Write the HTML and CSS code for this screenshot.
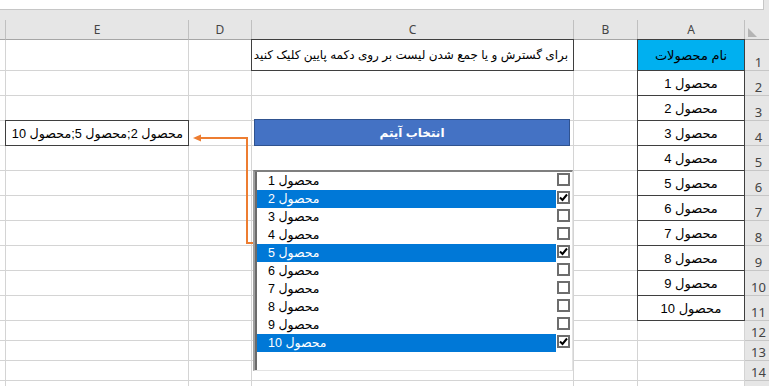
FILE: index.html
```html
<!DOCTYPE html>
<html lang="fa">
<head>
    <meta charset="UTF-8">
    <meta name="viewport" content="width=device-width, initial-scale=1.0">
    <title>لیست محصولات</title>
    <link rel="stylesheet" href="styles.css">
</head>
<body>

<div id="excel">
    <div class="formula-bar"><div class="formula-box"></div></div>
    <div class="outline-strip"></div>

    <div class="row col-head">
        <div></div><div>E</div><div>D</div><div>C</div><div>B</div><div>A</div>
        <div class="corner"><span class="tri"></span></div>
    </div>

    <div class="row tall">
        <div></div><div></div><div></div>
        <div class="boxed note" dir="rtl">برای گسترش و یا جمع شدن لیست بر روی دکمه پایین کلیک کنید</div>
        <div></div>
        <div class="boxed center title" dir="rtl">نام محصولات</div>
        <div class="num">1</div>
    </div>
    <div class="row">
        <div></div><div></div><div></div><div></div><div></div>
        <div class="boxed center" dir="rtl">محصول 1</div>
        <div class="num">2</div>
    </div>
    <div class="row">
        <div></div><div></div><div></div><div></div><div></div>
        <div class="boxed center" dir="rtl">محصول 2</div>
        <div class="num">3</div>
    </div>
    <div class="row">
        <div></div>
        <div class="boxed result" dir="rtl">محصول 2;محصول 5;محصول 10</div>
        <div></div><div></div><div></div>
        <div class="boxed center" dir="rtl">محصول 3</div>
        <div class="num">4</div>
    </div>
    <div class="row">
        <div></div><div></div><div></div><div></div><div></div>
        <div class="boxed center" dir="rtl">محصول 4</div>
        <div class="num">5</div>
    </div>
    <div class="row">
        <div></div><div></div><div></div><div></div><div></div>
        <div class="boxed center" dir="rtl">محصول 5</div>
        <div class="num">6</div>
    </div>
    <div class="row">
        <div></div><div></div><div></div><div></div><div></div>
        <div class="boxed center" dir="rtl">محصول 6</div>
        <div class="num">7</div>
    </div>
    <div class="row">
        <div></div><div></div><div></div><div></div><div></div>
        <div class="boxed center" dir="rtl">محصول 7</div>
        <div class="num">8</div>
    </div>
    <div class="row">
        <div></div><div></div><div></div><div></div><div></div>
        <div class="boxed center" dir="rtl">محصول 8</div>
        <div class="num">9</div>
    </div>
    <div class="row">
        <div></div><div></div><div></div><div></div><div></div>
        <div class="boxed center" dir="rtl">محصول 9</div>
        <div class="num">10</div>
    </div>
    <div class="row">
        <div></div><div></div><div></div><div></div><div></div>
        <div class="boxed center" dir="rtl">محصول 10</div>
        <div class="num">11</div>
    </div>
    <div class="row short">
        <div></div><div></div><div></div><div></div><div></div><div></div>
        <div class="num">12</div>
    </div>
    <div class="row short">
        <div></div><div></div><div></div><div></div><div></div><div></div>
        <div class="num">13</div>
    </div>
    <div class="row short">
        <div></div><div></div><div></div><div></div><div></div><div></div>
        <div class="num">14</div>
    </div>
    <div class="row short">
        <div></div><div></div><div></div><div></div><div></div><div></div>
        <div class="num"></div>
    </div>

    <!-- shapes lying over the sheet -->
    <div class="pick-btn" dir="rtl">انتخاب آیتم</div>

    <svg class="link" width="70" height="120" viewBox="0 0 70 120">
        <path d="M10 8 H57 V113 H66" fill="none" stroke="#ed7d31" stroke-width="2"/>
        <polygon points="3,8 11,4.5 11,11.5" fill="#ed7d31"/>
    </svg>

    <div class="listbox">
        <div class="item"><span class="label" dir="rtl">محصول 1</span><span class="cb"></span></div>
        <div class="item on"><span class="label" dir="rtl">محصول 2</span><span class="cb"><svg width="9" height="9" viewBox="0 0 9 9"><path d="M1 4.5 L3.5 7 L8 1.5" fill="none" stroke="#000" stroke-width="2"/></svg></span></div>
        <div class="item"><span class="label" dir="rtl">محصول 3</span><span class="cb"></span></div>
        <div class="item"><span class="label" dir="rtl">محصول 4</span><span class="cb"></span></div>
        <div class="item on"><span class="label" dir="rtl">محصول 5</span><span class="cb"><svg width="9" height="9" viewBox="0 0 9 9"><path d="M1 4.5 L3.5 7 L8 1.5" fill="none" stroke="#000" stroke-width="2"/></svg></span></div>
        <div class="item"><span class="label" dir="rtl">محصول 6</span><span class="cb"></span></div>
        <div class="item"><span class="label" dir="rtl">محصول 7</span><span class="cb"></span></div>
        <div class="item"><span class="label" dir="rtl">محصول 8</span><span class="cb"></span></div>
        <div class="item"><span class="label" dir="rtl">محصول 9</span><span class="cb"></span></div>
        <div class="item on"><span class="label" dir="rtl">محصول 10</span><span class="cb"><svg width="9" height="9" viewBox="0 0 9 9"><path d="M1 4.5 L3.5 7 L8 1.5" fill="none" stroke="#000" stroke-width="2"/></svg></span></div>
    </div>
</div>

</body>
</html>
```

FILE: styles.css
```css
body {
    margin: 0;
    padding: 0;
    background-color: #fff;
    font-family: "Liberation Sans", "DejaVu Sans", sans-serif;
    font-size: 12px;
    color: #000;
    overflow: hidden;
}

#excel {
    position: relative;
    width: 769px;
    height: 386px;
    overflow: hidden;
}

.formula-bar {
    height: 10px;
    background-color: #e6e6e6;
}

.formula-box {
    width: 764px;
    height: 10px;
    box-sizing: border-box;
    background-color: #fff;
    border-right: 1px solid #c6c6c6;
    border-bottom: 1px solid #c6c6c6;
}

.outline-strip {
    height: 10px;
    background-color: #e6e6e6;
}

.row {
    display: grid;
    grid-template-columns: 6px 183px 63px 322px 64px 107px 24px;
    height: 25px;
}

.row.tall {
    height: 31px;
}

.row.short,
.row.col-head {
    height: 20px;
}

.row > div {
    box-sizing: border-box;
    border-right: 1px solid #d4d4d4;
    border-bottom: 1px solid #d4d4d4;
    display: flex;
    align-items: center;
    min-width: 0;
    overflow: hidden;
    white-space: nowrap;
}

.col-head > div {
    background-color: #e6e6e6;
    border-right-color: #c0c0c0;
    border-bottom-color: #a6a6a6;
    justify-content: center;
    font-family: "Noto Sans", sans-serif;
    font-size: 12px;
    color: #444;
}

.row > .corner {
    border-right: none;
    justify-content: flex-start;
    align-items: flex-end;
    padding: 0 0 2px 3px;
}

.tri {
    width: 0;
    height: 0;
    border-left: 9px solid #b4b4b4;
    border-top: 9px solid transparent;
}

.row > .num {
    background-color: #e6e6e6;
    border-right: none;
    border-bottom-color: #c6c6c6;
    justify-content: center;
    align-items: flex-end;
    padding-left: 3px;
    font-family: "Noto Sans", sans-serif;
    font-size: 13px;
    line-height: 16px;
    color: #444;
}

.row > .boxed {
    margin: -1px 0 0 -1px;
    border: 1px solid #3f3f3f;
}

.center {
    justify-content: center;
    font-size: 13px;
}

.title {
    background-color: #00b0f0;
}

.note,
.result {
    padding: 0 5px;
}

.result {
    font-size: 12.7px;
}

.pick-btn {
    position: absolute;
    left: 254px;
    top: 119px;
    width: 316px;
    height: 27px;
    box-sizing: border-box;
    background-color: #4472c4;
    border: 1px solid #2f528f;
    color: #fff;
    font-weight: bold;
    display: flex;
    align-items: center;
    justify-content: center;
}

.link {
    position: absolute;
    left: 190px;
    top: 130px;
}

.listbox {
    position: absolute;
    left: 253px;
    top: 170px;
    width: 320px;
    height: 201px;
    box-sizing: border-box;
    background-color: #fff;
    border-top: 2px solid #7f7f7f;
    border-left: 2px solid #a0a0a0;
    border-right: 1px solid #e3e3e3;
    border-bottom: 1px solid #e3e3e3;
    box-shadow: inset 2px 0 0 #6b6b6b;
    padding-left: 2px;
}

.item {
    display: flex;
    height: 18px;
}

.label {
    width: 299px;
    box-sizing: border-box;
    padding-left: 11px;
    text-align: left;
    line-height: 18px;
    font-size: 12.5px;
    white-space: nowrap;
}

.item.on .label {
    background-color: #0078d7;
    color: #fff;
}

.cb {
    width: 13px;
    height: 13px;
    box-sizing: border-box;
    margin: 1px 0 0 1px;
    border: 2px solid #6d6d6d;
    background-color: #fff;
    display: flex;
    align-items: center;
    justify-content: center;
}
```
